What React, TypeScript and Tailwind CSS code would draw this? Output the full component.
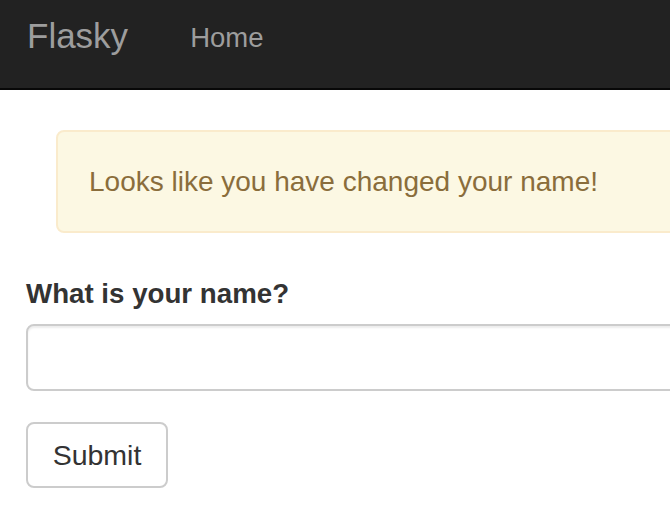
import React from "react";

export default function App() {
  return (
    <div className="w-[670px] h-[518px] overflow-hidden bg-white font-['Liberation_Sans',Arial,sans-serif]">
      <nav className="h-[90px] bg-[#222222] border-b-2 border-[#080808] flex items-start">
        <span className="ml-[27px] mt-[18px] text-[35px] leading-none text-[#9d9d9d]">Flasky</span>
        <span className="ml-[62px] mt-[24px] text-[27.5px] leading-none text-[#9d9d9d]">Home</span>
      </nav>
      <div className="ml-[56px] mt-[40px] w-[720px] h-[103px] flex items-center pl-[31px] border-2 border-[#faebcc] bg-[#fcf8e3] rounded-[8px]">
        <span className="text-[28px] leading-none text-[#8a6d3b]">Looks like you have changed your name!</span>
      </div>
      <form className="ml-[26px]">
        <label className="block mt-[47px] text-[27.7px] leading-[28px] font-bold text-[#333333]">What is your name?</label>
        <input
          type="text"
          className="block mt-[16px] w-[800px] h-[67px] border-2 border-[#cccccc] rounded-[8px] bg-white shadow-[inset_0_2px_2px_rgba(0,0,0,0.075)] outline-none"
        />
        <button
          type="button"
          className="block mt-[31px] w-[142px] h-[66px] border-2 border-[#cccccc] rounded-[8px] bg-white text-[28.5px] leading-none text-[#333333]"
        >
          Submit
        </button>
      </form>
    </div>
  );
}
